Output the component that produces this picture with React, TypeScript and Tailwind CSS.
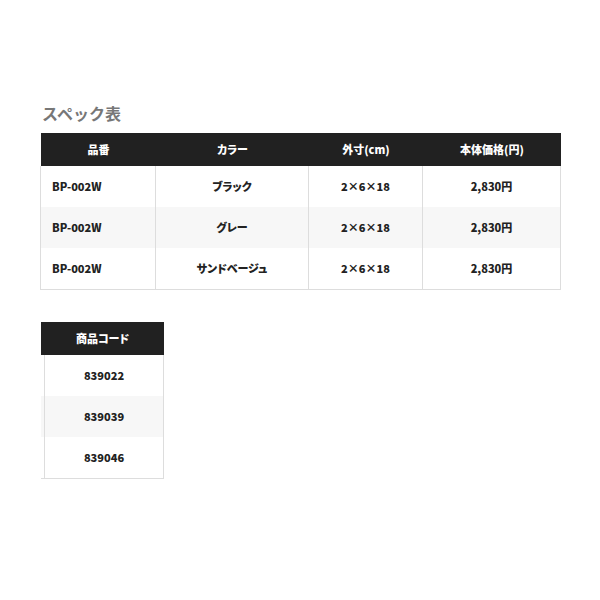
import React from "react";

const rows = [
  { code: "BP-002W", color: "ブラック", size: "2×6×18", price: "2,830円" },
  { code: "BP-002W", color: "グレー", size: "2×6×18", price: "2,830円" },
  { code: "BP-002W", color: "サンドベージュ", size: "2×6×18", price: "2,830円" },
];

const codes = ["839022", "839039", "839046"];

export default function App() {
  return (
    <div className="w-[600px] h-[600px] bg-white font-['Noto_Sans_CJK_JP','Noto_Sans',sans-serif] text-[#222]">
      <div className="pt-[103px] pl-[40px]">
        <h2 className="pl-[2px] text-[16px] leading-[20px] font-bold text-[#777]">スペック表</h2>

        <div className="mt-[10px] w-[521px] [font-feature-settings:'palt']">
          <div className="ml-[1px] flex h-[33px] w-[520px] items-center bg-[#212121] text-[11px] font-black text-white">
            <div className="w-[115px] text-center">品番</div>
            <div className="w-[153px] text-center">カラー</div>
            <div className="w-[114px] text-center">外寸(cm)</div>
            <div className="w-[138px] text-center">本体価格(円)</div>
          </div>
          <div className="border-b border-[#dddddd]">
            {rows.map((r, i) => (
              <div
                key={i}
                className={`flex h-[41px] border-l border-[#dddddd] text-[11px] font-black ${i === 1 ? "bg-[#f7f7f7]" : "bg-white"}`}
              >
                <div className="flex w-[115px] items-center border-r border-[#dddddd] pl-[11px]">{r.code}</div>
                <div className="flex w-[153px] items-center justify-center border-r border-[#dddddd]">{r.color}</div>
                <div className="flex w-[114px] items-center justify-center border-r border-[#dddddd]">{r.size}</div>
                <div className="flex w-[138px] items-center justify-center border-r border-[#dddddd]">{r.price}</div>
              </div>
            ))}
          </div>
        </div>

        <div className="mt-[32px] ml-[1px] w-[123px] [font-feature-settings:'palt']">
          <div className="flex h-[33px] w-[123px] items-center justify-center bg-[#212121] text-[11px] font-black text-white">
            商品コード
          </div>
          <div className="border-b border-[#dddddd]">
            {codes.map((c, i) => (
              <div
                key={c}
                className={`flex h-[41px] border-r border-[#dddddd] pl-[3px] ${i === 1 ? "bg-[#f7f7f7]" : "bg-white"}`}
              >
                <div className="flex flex-1 items-center justify-center border-l border-[#dddddd] text-[11px] font-black">
                  {c}
                </div>
              </div>
            ))}
          </div>
        </div>
      </div>
    </div>
  );
}
